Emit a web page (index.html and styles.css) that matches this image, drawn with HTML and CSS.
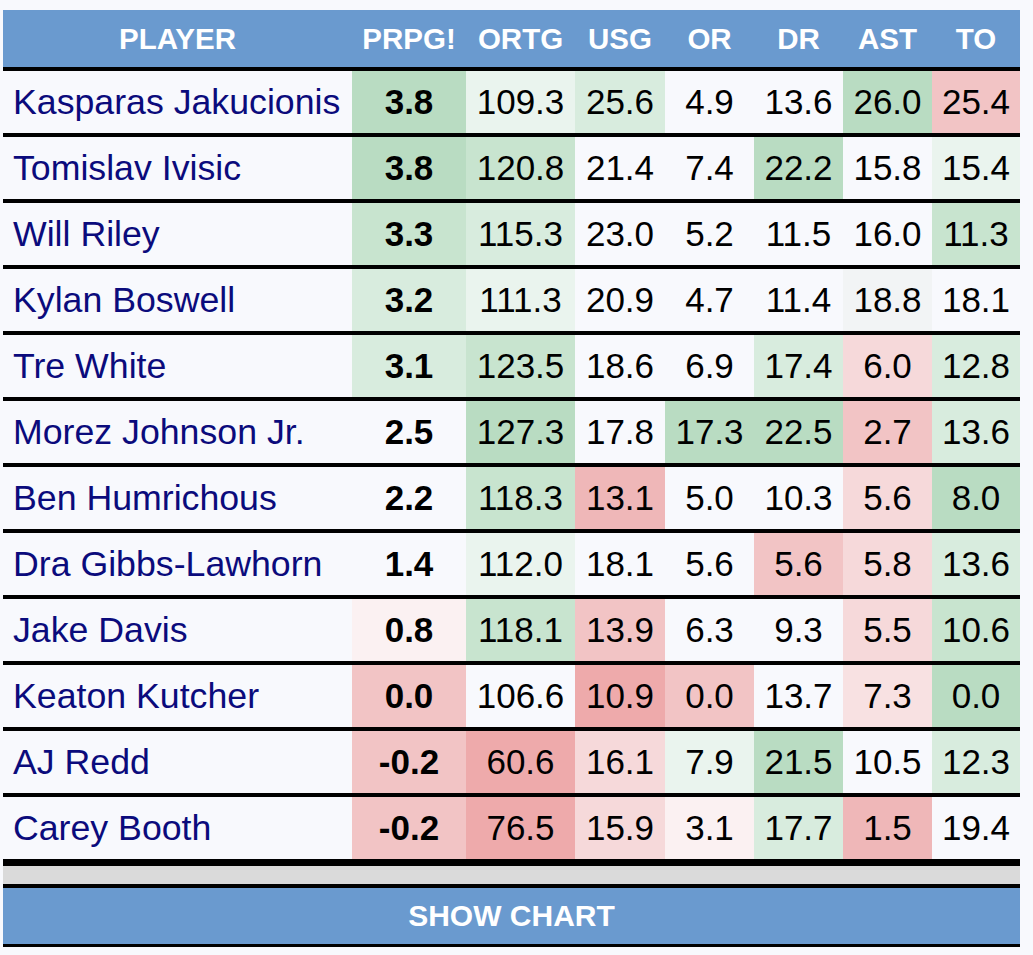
FILE: index.html
```html
<!DOCTYPE html>
<html>
<head>
<meta charset="utf-8">
<link rel="stylesheet" href="styles.css">
</head>
<body>
<div class="wrap">
  <table class="stats">
    <colgroup>
      <col class="c-name"><col class="c-prpg"><col class="c-ortg"><col class="c-usg"><col class="c-or"><col class="c-dr"><col class="c-ast"><col class="c-to">
    </colgroup>
    <thead>
      <tr><th>PLAYER</th><th>PRPG!</th><th>ORTG</th><th>USG</th><th>OR</th><th>DR</th><th>AST</th><th>TO</th></tr>
    </thead>
    <tbody>
      <tr><td class="name">Kasparas Jakucionis</td><td class="prpg g3">3.8</td><td class="g0">109.3</td><td class="g1">25.6</td><td>4.9</td><td>13.6</td><td class="g3">26.0</td><td class="r2">25.4</td></tr>
      <tr><td class="name">Tomislav Ivisic</td><td class="prpg g3">3.8</td><td class="g2">120.8</td><td>21.4</td><td>7.4</td><td class="g3">22.2</td><td>15.8</td><td class="g0">15.4</td></tr>
      <tr><td class="name">Will Riley</td><td class="prpg g2">3.3</td><td class="g1">115.3</td><td>23.0</td><td>5.2</td><td>11.5</td><td>16.0</td><td class="g2">11.3</td></tr>
      <tr><td class="name">Kylan Boswell</td><td class="prpg g1">3.2</td><td class="g0">111.3</td><td>20.9</td><td>4.7</td><td>11.4</td><td class="n1">18.8</td><td>18.1</td></tr>
      <tr><td class="name">Tre White</td><td class="prpg g1">3.1</td><td class="g2">123.5</td><td>18.6</td><td>6.9</td><td class="g1">17.4</td><td class="r1">6.0</td><td class="g1">12.8</td></tr>
      <tr><td class="name">Morez Johnson Jr.</td><td class="prpg">2.5</td><td class="g3">127.3</td><td>17.8</td><td class="g3">17.3</td><td class="g3">22.5</td><td class="r2">2.7</td><td class="g1">13.6</td></tr>
      <tr><td class="name">Ben Humrichous</td><td class="prpg">2.2</td><td class="g2">118.3</td><td class="r3">13.1</td><td>5.0</td><td>10.3</td><td class="r1">5.6</td><td class="g3">8.0</td></tr>
      <tr><td class="name">Dra Gibbs-Lawhorn</td><td class="prpg">1.4</td><td class="g0">112.0</td><td>18.1</td><td>5.6</td><td class="r2">5.6</td><td class="r1">5.8</td><td class="g1">13.6</td></tr>
      <tr><td class="name">Jake Davis</td><td class="prpg r0">0.8</td><td class="g2">118.1</td><td class="r2">13.9</td><td>6.3</td><td>9.3</td><td class="r1">5.5</td><td class="g2">10.6</td></tr>
      <tr><td class="name">Keaton Kutcher</td><td class="prpg r2">0.0</td><td>106.6</td><td class="r4">10.9</td><td class="r2">0.0</td><td>13.7</td><td class="r0b">7.3</td><td class="g3">0.0</td></tr>
      <tr><td class="name">AJ Redd</td><td class="prpg r2">-0.2</td><td class="r4">60.6</td><td class="r1">16.1</td><td class="g0">7.9</td><td class="g3">21.5</td><td>10.5</td><td class="g1">12.3</td></tr>
      <tr><td class="name">Carey Booth</td><td class="prpg r2">-0.2</td><td class="r4">76.5</td><td class="r1">15.9</td><td class="r0">3.1</td><td class="g1">17.7</td><td class="r3">1.5</td><td>19.4</td></tr>
    </tbody>
  </table>
  <div class="spacer"></div>
  <div class="chart-btn">SHOW CHART</div>
</div>
</body>
</html>
```

FILE: styles.css
```css
html, body {
  margin: 0;
  padding: 0;
  background: #f8f9fd;
}

body {
  font-family: "Liberation Sans", Arial, sans-serif;
}

.wrap {
  width: 1017px;
  margin: 10px 0 0 3px;
}

.stats {
  width: 1017px;
  border-collapse: collapse;
  table-layout: fixed;
}

.c-name { width: 349px; }
.c-prpg { width: 114px; }
.c-ortg { width: 109px; }
.c-usg { width: 90px; }
.c-or { width: 89px; }
.c-dr { width: 89px; }
.c-ast { width: 89px; }
.c-to { width: 88px; }

.stats th {
  background: #6a9acf;
  color: #ffffff;
  font-weight: bold;
  font-size: 29.5px;
  height: 57px;
  padding: 0;
  text-align: center;
  vertical-align: middle;
  white-space: nowrap;
}

.stats tbody tr {
  border-top: 4px solid #000;
}

.stats tbody tr:last-child {
  border-bottom: 7px solid #000;
}

.stats td {
  height: 62px;
  padding: 0;
  font-size: 35px;
  color: #000;
  text-align: center;
  vertical-align: middle;
  white-space: nowrap;
}

.stats td.name {
  text-align: left;
  padding-left: 10px;
  font-size: 35.7px;
  color: #0b0b7c;
}

.stats td.prpg {
  font-weight: bold;
}

.g3 { background: #b9dcc2; }
.g2 { background: #c8e4cf; }
.g1 { background: #d8ecde; }
.g0 { background: #eaf4ee; }
.n1 { background: #f2f4f5; }
.r0 { background: #fbf1f2; }
.r0b { background: #f8e1e2; }
.r1 { background: #f6d9da; }
.r2 { background: #f2c4c5; }
.r3 { background: #efb7b8; }
.r4 { background: #eeaaab; }

.spacer {
  height: 18px;
  background: #dadada;
}

.chart-btn {
  border-top: 4px solid #000;
  border-bottom: 3px solid #000;
  height: 56px;
  background: #6a9acf;
  color: #fff;
  font-weight: bold;
  font-size: 30px;
  display: flex;
  align-items: center;
  justify-content: center;
}
```
